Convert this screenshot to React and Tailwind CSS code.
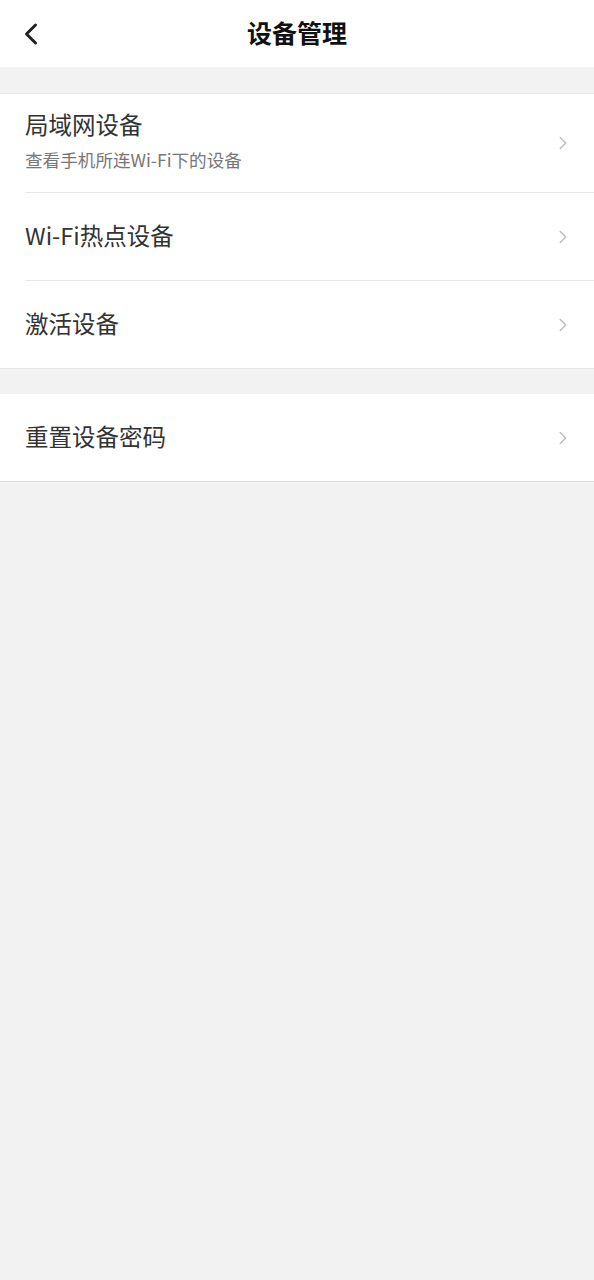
import { ChevronLeft, ChevronRight } from 'lucide-react';

const font = { fontFamily: '"Noto Sans CJK SC", "Noto Sans", sans-serif' };

function Row({ title, sub, last, height }) {
  return (
    <div className={`flex items-center pl-[25px] ${height}`}>
      <div className={`flex h-full flex-1 items-center pr-[20px] ${last ? '' : 'border-b border-[#e8e8e8]'}`}>
        <div className={`flex-1 ${sub ? 'pb-[7px]' : 'pb-[4px]'}`}>
          <div className="text-[23.5px] leading-[30px] text-[#333]">{title}</div>
          {sub && <div className="mt-[10px] text-[17.6px] leading-[22px] text-[#777]">{sub}</div>}
        </div>
        <ChevronRight size={22} strokeWidth={1.6} className="text-[#bdbdbd]" />
      </div>
    </div>
  );
}

export default function App() {
  return (
    <div className="min-h-[1280px] bg-[#f2f2f2]" style={font}>
      <div className="relative flex h-[67px] items-center justify-center bg-white">
        <ChevronLeft size={36} strokeWidth={2} className="absolute left-[13px] top-[16px] text-[#222]" />
        <div className="pb-[2px] text-[25px] font-bold text-[#111]">设备管理</div>
      </div>
      <div className="mt-[26px] border-y border-[#e6e6e6] bg-white">
        <Row title="局域网设备" sub="查看手机所连Wi-Fi下的设备" height="h-[99px]" />
        <Row title="Wi-Fi热点设备" height="h-[88px]" />
        <Row title="激活设备" height="h-[87px]" last />
      </div>
      <div className="mt-[25px] border-b border-[#dcdcdc] bg-white">
        <Row title="重置设备密码" height="h-[87px]" last />
      </div>
    </div>
  );
}
